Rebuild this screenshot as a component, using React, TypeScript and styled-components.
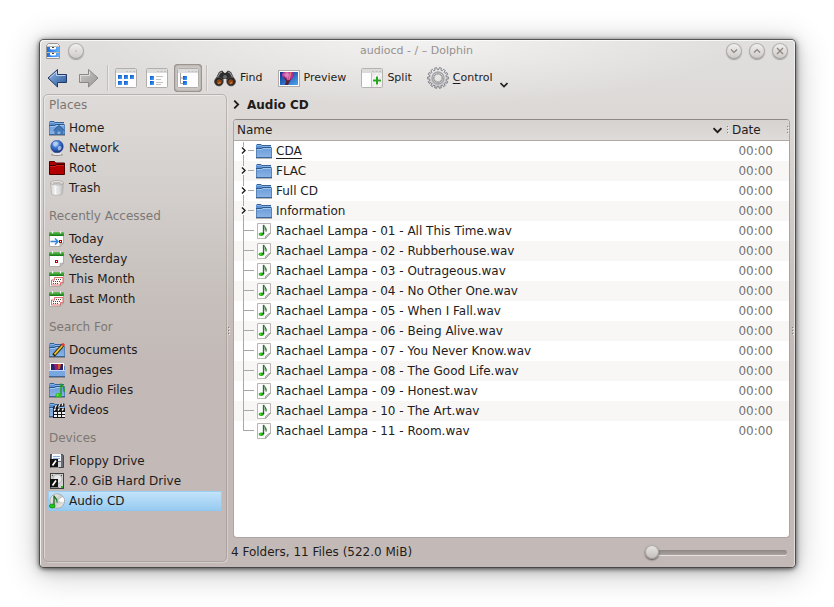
import React, { useState } from "react";
import styled, { createGlobalStyle, css } from "styled-components";

const GlobalStyle = createGlobalStyle`
  *, *::before, *::after { box-sizing: border-box; }
  body {
    margin: 0;
    background: #ffffff;
    color: #1f1c1b;
    font-family: "DejaVu Sans", sans-serif;
    font-size: 12px;
    line-height: 20px;
  }
  button {
    font: inherit;
    color: inherit;
    background: none;
    border: 0;
    padding: 0;
    margin: 0;
  }
  ul { list-style: none; margin: 0; padding: 0; }
  svg { display: block; flex: none; }
`;

const Desktop = styled.div`
  display: flex;
  min-height: 100vh;
  padding: 40px 39px 40px 40px;
`;

const Window = styled.main`
  display: flex;
  flex-direction: column;
  flex: 1;
  min-width: 0;
  border-radius: 4px;
  background:
    radial-gradient(ellipse 320px 66px at 50% 0, rgba(255, 255, 255, 0.6), rgba(255, 255, 255, 0)),
    linear-gradient(#e1dfde 0, #dcd9d7 70px, #d3cfcc 150px, #c6bfbb 260px, #c3bab7 320px);
  box-shadow:
    inset 1px 1px 0 rgba(255, 255, 255, 0.75),
    inset -1px 0 0 rgba(255, 255, 255, 0.5),
    0 0 0 1px rgba(60, 60, 60, 0.72),
    0 1px 4px 1px rgba(0, 0, 0, 0.6),
    0 2px 12px 1px rgba(0, 0, 0, 0.26),
    0 5px 32px 4px rgba(0, 0, 0, 0.2);
`;

const TitleBar = styled.header`
  display: grid;
  grid-template-columns: 1fr auto 1fr;
  align-items: center;
  height: 22px;
  padding: 0 7px 0 5px;
`;

const Title = styled.h1`
  margin: 0;
  font-size: 11px;
  font-weight: 400;
  line-height: 20px;
  color: #96918e;
`;

const TitleButtons = styled.div<{ $end?: boolean }>`
  display: flex;
  align-items: center;
  gap: 7px;
  justify-content: ${(p) => (p.$end ? "flex-end" : "flex-start")};
`;

const RoundButton = styled.button`
  display: grid;
  place-items: center;
  width: 16px;
  height: 16px;
  border-radius: 50%;
  background: linear-gradient(#f3f2f1, #cbc7c5);
  box-shadow: inset 0 0 0 1px rgba(125, 118, 114, 0.5), 0 1px 1px rgba(0, 0, 0, 0.28);
  color: #8b8582;
`;

const ToolBar = styled.div`
  display: flex;
  align-items: center;
  gap: 3px;
  height: 28px;
  margin-top: 2px;
  padding-left: 4px;
`;

const ToolButton = styled.button<{ $pressed?: boolean; $labelled?: boolean }>`
  display: flex;
  align-items: center;
  gap: 4px;
  height: 28px;
  padding: 0 ${(p) => (p.$labelled ? 9 : 3)}px 0 3px;
  font-size: 11px;
  border-radius: 4px;
  ${(p) =>
    p.$pressed &&
    css`
      background: #cdc7c4;
      box-shadow: inset 0 0 0 1px #9b9491, inset 0 0 2px 1px rgba(90, 80, 75, 0.4);
    `}
`;

const Mnemonic = styled.span`
  text-decoration: underline;
  text-underline-offset: 2px;
`;

const MenuArrow = styled.span`
  align-self: flex-end;
  margin: 0 0 3px 3px;
`;

const Separator = styled.span`
  width: 1px;
  height: 26px;
  margin: 0 1px;
  background: #c3bebb;
  box-shadow: 1px 0 0 #eceae9;
`;

const Content = styled.div`
  display: grid;
  grid-template-columns: 184px 4px minmax(0, 1fr) 5px;
  flex: 1;
  padding: 2px 0 0 3px;
`;

const Places = styled.nav`
  margin-bottom: 5px;
  padding: 0 4px;
  border: 1px solid rgba(150, 140, 136, 0.5);
  border-radius: 5px;
  box-shadow: inset 1px 1px 0 rgba(255, 255, 255, 0.4), 1px 1px 0 rgba(255, 255, 255, 0.3);
`;

const PlacesSection = styled.section`
  & + & { margin-top: 8px; }
`;

const PlacesHeading = styled.h2`
  margin: 0 0 3px;
  padding-left: 1px;
  font-size: 12px;
  font-weight: 400;
  line-height: 20px;
  color: #7d7774;
`;

const PlaceButton = styled.button<{ $selected: boolean }>`
  display: flex;
  align-items: center;
  gap: 4px;
  width: 100%;
  height: 20px;
  padding-left: 1px;
  line-height: 20px;
  text-align: left;
  border-radius: 2px;
  ${(p) =>
    p.$selected &&
    css`
      background: linear-gradient(#c5e4fa, #94caf0);
      box-shadow: inset 0 0 0 1px rgba(140, 199, 240, 0.7);
    `}
`;

const Splitter = styled.div`
  display: grid;
  place-items: center;
`;

const MainPane = styled.section`
  display: flex;
  flex-direction: column;
  min-width: 0;
`;

const Breadcrumb = styled.nav`
  display: flex;
  align-items: center;
  gap: 6px;
  height: 25px;
  padding: 0 0 4px 1px;
`;

const Crumb = styled.a`
  font-weight: 700;
  color: inherit;
  text-decoration: none;
`;

const ListFrame = styled.div`
  flex: 1;
  margin-left: 2px;
  overflow: hidden;
  background: #ffffff;
  border: 1px solid #aca5a2;
  border-top-color: #8f8885;
  border-radius: 4px;
`;

const FileTable = styled.table`
  width: 100%;
  table-layout: fixed;
  border-collapse: collapse;
`;

const DateColumn = styled.col`
  width: 60px;
`;

const HeadCell = styled.th`
  height: 20px;
  padding: 0 0 0 3px;
  font-weight: 400;
  line-height: 20px;
  text-align: left;
  background: linear-gradient(#d6d2d0, #dedbd9);
  border-bottom: 1px solid #b1a9a5;
`;

const HeadContent = styled.div`
  display: flex;
  align-items: center;
  gap: 5px;
  height: 19px;
  padding-top: 1px;
`;

const Spacer = styled.span`
  flex: 1;
`;

const FileRow = styled.tr`
  height: 20px;
  &:nth-child(even) { background: #f8f7f6; }
`;

const NameCell = styled.td`
  padding: 0;
`;

const NameContent = styled.div`
  display: flex;
  align-items: center;
  height: 20px;
`;

const FileName = styled.span<{ $current: boolean }>`
  margin-left: 4px;
  white-space: nowrap;
  ${(p) =>
    p.$current &&
    css`
      line-height: 14px;
      box-shadow: 0 1px 0 #1f1c1b;
    `}
`;

const DateCell = styled.td`
  padding: 0 16px 0 0;
  text-align: right;
  color: #77716e;
`;

const StatusBar = styled.footer`
  display: flex;
  align-items: center;
  justify-content: space-between;
  height: 29px;
  padding: 0 3px 1px 0;
`;

const ZoomSlider = styled.input`
  appearance: none;
  width: 142px;
  height: 16px;
  margin: 0;
  background: none;
  &::-webkit-slider-runnable-track {
    height: 5px;
    border-radius: 3px;
    background: linear-gradient(#8f8783, #aaa29e);
    box-shadow: 0 1px 0 #e6e2e0;
  }
  &::-webkit-slider-thumb {
    appearance: none;
    width: 14px;
    height: 14px;
    margin-top: -5px;
    border-radius: 50%;
    background: linear-gradient(#e9e7e6, #c2bdba);
    box-shadow: inset 0 0 0 1px rgba(130, 122, 118, 0.55), 0 1px 2px rgba(0, 0, 0, 0.6);
  }
`;

/* ---------- drawings ---------- */

const HiddenDefs = styled.svg`
  position: absolute;
`;

const Gradients = () => (
  <HiddenDefs width="0" height="0" aria-hidden="true">
    <defs>
      <linearGradient id="folder" x1="0" y1="0" x2="0" y2="1">
        <stop offset="0" stopColor="#6e9dd9" />
        <stop offset="1" stopColor="#8ab4e6" />
      </linearGradient>
      <linearGradient id="blue" x1="0" y1="0" x2="1" y2="1">
        <stop offset="0" stopColor="#a3c1e6" />
        <stop offset="0.5" stopColor="#5b86be" />
        <stop offset="1" stopColor="#2b5592" />
      </linearGradient>
      <linearGradient id="grey" x1="0" y1="0" x2="1" y2="1">
        <stop offset="0" stopColor="#c9c7c6" />
        <stop offset="1" stopColor="#9b9998" />
      </linearGradient>
      <linearGradient id="sky" x1="0" y1="0" x2="1" y2="1">
        <stop offset="0" stopColor="#0a2f8c" />
        <stop offset="1" stopColor="#4ba6f2" />
      </linearGradient>
      <linearGradient id="tile" x1="0" y1="0" x2="1" y2="1">
        <stop offset="0" stopColor="#0a51c4" />
        <stop offset="1" stopColor="#4aa8ff" />
      </linearGradient>
      <linearGradient id="green" x1="0" y1="0" x2="0" y2="1">
        <stop offset="0" stopColor="#6cc257" />
        <stop offset="1" stopColor="#0f7a14" />
      </linearGradient>
      <linearGradient id="drawer" x1="0" y1="0" x2="1" y2="0">
        <stop offset="0" stopColor="#1f6fe0" />
        <stop offset="1" stopColor="#62b0fa" />
      </linearGradient>
      <linearGradient id="metal" x1="0" y1="0" x2="0" y2="1">
        <stop offset="0" stopColor="#f2f2f4" />
        <stop offset="1" stopColor="#c4c4c9" />
      </linearGradient>
      <radialGradient id="balloon" cx="0.4" cy="0.3" r="0.7">
        <stop offset="0" stopColor="#f09ad0" />
        <stop offset="0.5" stopColor="#b43aa0" />
        <stop offset="1" stopColor="#7a2478" />
      </radialGradient>
      <radialGradient id="globe" cx="0.4" cy="0.3" r="0.7">
        <stop offset="0" stopColor="#bcd8fa" />
        <stop offset="0.45" stopColor="#3c74cf" />
        <stop offset="1" stopColor="#122f7c" />
      </radialGradient>
      <linearGradient id="can" x1="0" y1="0" x2="1" y2="0">
        <stop offset="0" stopColor="#c9c9c9" />
        <stop offset="0.35" stopColor="#ffffff" />
        <stop offset="1" stopColor="#b4b4b4" />
      </linearGradient>
      <linearGradient id="disc" x1="0" y1="0" x2="1" y2="1">
        <stop offset="0" stopColor="#ffffff" />
        <stop offset="0.5" stopColor="#c9c9c9" />
        <stop offset="1" stopColor="#f4f4f4" />
      </linearGradient>
    </defs>
  </HiddenDefs>
);

const Icon16 = ({ children }: { children: React.ReactNode }) => (
  <svg width="16" height="16" viewBox="0 0 16 16" aria-hidden="true">
    {children}
  </svg>
);

const Icon22 = ({ children }: { children: React.ReactNode }) => (
  <svg width="22" height="22" viewBox="0 0 22 22" aria-hidden="true">
    {children}
  </svg>
);

const FolderShape = () => (
  <>
    <path d="M0 14V2l1-1h4l1 1h9v12z" fill="#5b8fd0" />
    <path d="M1 1.500h4M6 2.500h9" stroke="#356193" />
    <path d="M1 2.500h4M6 3.500h9" stroke="#86b1e6" />
    <path d="M0 14.500V7h5l1-1.500h10v9z" fill="url(#folder)" />
    <path d="M0 5.500h5.500l1-1H15.500" stroke="#2b5688" fill="none" />
    <path d="M1 6.500h5l1-1H15" stroke="#a2c8f2" fill="none" />
    <path d="M0.500 6v8.500M15.500 5v9.500" stroke="#5684bd" />
    <path d="M0 14.500h16" stroke="#3c6595" />
    <path d="M0 15.500h16" stroke="#2a3138" strokeOpacity="0.35" />
  </>
);

const FolderIcon = () => <Icon16><FolderShape /></Icon16>;

const AudioFileIcon = () => (
  <Icon16>
    <path d="M1.500 0.500h13v9.500l-5 5.500h-8z" fill="#fcfcfc" stroke="#b9b6b4" />
    <path d="M14.500 10l-5 5.500v-2l3-2.500z" fill="#e2e0df" stroke="#8f8b89" strokeWidth="0.800" />
    <path d="M7.500 10.500V2c0.500 2 3.800 3 2.500 6.500" fill="none" stroke="#2c6b34" strokeWidth="1.300" />
    <path d="M8.500 3.500v4" stroke="#8fbf93" strokeWidth="0.800" />
    <ellipse cx="5.300" cy="11.300" rx="2.700" ry="1.800" fill="#26a51c" />
    <circle cx="4.500" cy="11.200" r="1" fill="#3fe01e" />
    <circle cx="7.400" cy="10.300" r="0.900" fill="#0d5a12" />
  </Icon16>
);

const HomeIcon = () => (
  <Icon16>
    <FolderShape />
    <path d="M4 10.500l6-5.500 6 5.500h-1.500v4h-3v-3h-3v3h-3v-4z" fill="#4476b5" />
    <path d="M4.500 10.500l5.500-5 5.500 5" stroke="#2f5b94" fill="none" strokeWidth="0.900" />
  </Icon16>
);

const NetworkIcon = () => (
  <Icon16>
    <ellipse cx="8" cy="14.700" rx="6" ry="1.200" fill="#8e8a88" />
    <ellipse cx="8" cy="14" rx="4.500" ry="0.900" fill="#f0efee" />
    <circle cx="8" cy="6.500" r="6.300" fill="url(#globe)" stroke="#2a4d97" strokeWidth="0.500" />
    <path d="M4 3c2-2 4-1 5 0s-1 2-2 3-3 0-3-3M9.500 6.500c2-1 3 0 3 1.500s-2 3-3 2.500-1-3 0-4" fill="#b9d2f3" fillOpacity="0.75" />
  </Icon16>
);

const RootIcon = () => (
  <Icon16>
    <path d="M0.500 14.500V1.500h5l1 1.500h9v11.500z" fill="#b20000" stroke="#4c0000" />
    <path d="M1 5.500h5l1.500-1H15" stroke="#3a0000" fill="none" />
    <path d="M1 6.500h5.500l1.500-1H15" stroke="#d01c1c" fill="none" />
  </Icon16>
);

const TrashIcon = () => (
  <Icon16>
    <path d="M1.500 2.500l1 11.500c2 1.800 9 1.800 11 0l1-11.500z" fill="url(#can)" stroke="#b5b2b0" strokeWidth="0.800" />
    <path d="M5 6v8M8 6.500v8M11 6v8" stroke="#dddbda" strokeWidth="0.800" />
    <ellipse cx="8" cy="2.800" rx="6.500" ry="2.200" fill="#ededed" stroke="#a5a2a0" strokeWidth="0.800" />
    <ellipse cx="8" cy="3.100" rx="4.800" ry="1.200" fill="#bdbab8" />
  </Icon16>
);

const CalendarIcon = ({ kind }: { kind: "today" | "yesterday" | "month" }) => (
  <Icon16>
    <path d="M0.500 1.500h14v10.500l-3.500 3.500H0.500z" fill="#fcfcfc" stroke="#b0acaa" />
    <path d="M14.500 12l-3.500 3.500v-3z" fill="#d2cfce" stroke="#989492" strokeWidth="0.600" />
    <rect x="0" y="1" width="15" height="4" rx="1" fill="url(#green)" />
    <path d="M3.500 0v2.500M11.500 0v2.500" stroke="#f4f4f4" strokeWidth="1.200" />
    {kind === "month" && (
      <>
        <path d="M5.500 6.500h8.500v5h-2.500v2.500H2.500V9h3z" fill="#fff8f7" stroke="#d9605c" strokeWidth="0.900" />
        <path d="M7 8.500h6M4 10.500h8M4 12.500h6" stroke="#4a4a4a" strokeDasharray="1 1" />
      </>
    )}
    {kind === "today" && (
      <>
        <path d="M1.500 10.500h7M6 7.500l3 3-3 3" fill="none" stroke="#2f86d8" strokeWidth="1.400" />
        <rect x="10.500" y="9.500" width="2" height="2" fill="#fff" stroke="#c00000" />
      </>
    )}
    {kind === "yesterday" && <rect x="6.500" y="9.500" width="2" height="2" fill="#fff" stroke="#c00000" />}
  </Icon16>
);

const DocumentsIcon = () => (
  <Icon16>
    <FolderShape />
    <path d="M4.500 13.500L14 3" stroke="#2d2608" strokeWidth="3.400" />
    <path d="M5.500 12.300L14 3" stroke="#f0c22d" strokeWidth="1.800" />
    <path d="M13.200 3.800L15 1.800" stroke="#dc3a3a" strokeWidth="3" />
  </Icon16>
);

const ImagesIcon = () => (
  <Icon16>
    <FolderShape />
    <rect x="0.500" y="1" width="14.500" height="8" fill="#fff" />
    <rect x="2" y="2" width="12" height="6" fill="#26246e" />
    <path d="M5 2h5v6H6z" fill="#8e2470" />
    <path d="M9 2h3l-1 5H9z" fill="#d8532f" />
    <path d="M0 8h16v6.500H0z" fill="#78a6de" />
    <path d="M0 8.500h16" stroke="#c0daf6" />
    <path d="M0 14.500h16" stroke="#3c6595" />
  </Icon16>
);

const AudioFolderIcon = () => (
  <Icon16>
    <FolderShape />
    <path d="M12 13V1.500c0.500 3 4 3 3 8.500" fill="none" stroke="#229a24" strokeWidth="1.500" />
    <ellipse cx="9.500" cy="13.300" rx="3" ry="2.200" fill="#2bbf20" />
    <circle cx="8.700" cy="13" r="1" fill="#6df04a" />
  </Icon16>
);

const VideosIcon = () => (
  <Icon16>
    <FolderShape />
    <path d="M4 4.500l11-3.500 0.700 2.500L5 7z" fill="#151515" />
    <path d="M6 5.800l1.500-2.500M9.500 4.800L11 2.300M13 3.700l1-2.400" stroke="#fff" strokeWidth="1.200" />
    <rect x="4" y="6" width="12" height="10" fill="#151515" />
    <path d="M5 8.500l1.500-2M9 8.500l1.500-2M13 8.500l1.500-2" stroke="#fff" strokeWidth="1.300" />
    <path d="M5 11h3M9 11h3M13 11h3M5 14h3M9 14h3M13 14h3" stroke="#f2f2f2" strokeWidth="2" />
  </Icon16>
);

const DriveBadge = () => (
  <>
    <rect x="1" y="6" width="8" height="8" fill="#111" />
    <path d="M3.500 12.500L7 7.500" stroke="#fff" strokeWidth="1.700" />
    <path d="M2 14.500h8" stroke="#8a8a8a" />
  </>
);

const FloppyIcon = () => (
  <Icon16>
    <path d="M1.500 1.500h12l1 1v12h-13z" fill="#6a6d74" stroke="#45484e" />
    <rect x="3" y="1" width="9" height="7" fill="#f3f6fa" />
    <path d="M4 3.500h7M4 5.500h7" stroke="#8fb1d8" />
    <rect x="9" y="9" width="3" height="5" fill="#d4d6d9" />
    <DriveBadge />
  </Icon16>
);

const HardDriveIcon = () => (
  <Icon16>
    <rect x="1.500" y="0.500" width="13" height="15" fill="#d2d2d1" stroke="#3e3e3e" />
    <circle cx="8.500" cy="6" r="4.500" fill="#e6e6e6" stroke="#a6a6a6" strokeWidth="0.800" />
    <circle cx="3.500" cy="2.500" r="0.700" fill="#555" />
    <circle cx="12.500" cy="2.500" r="0.700" fill="#555" />
    <rect x="12" y="13" width="2" height="2" fill="#29b31f" />
    <DriveBadge />
  </Icon16>
);

const AudioCdIcon = () => (
  <Icon16>
    <circle cx="8.200" cy="8" r="7.300" fill="url(#disc)" stroke="#9c9a99" strokeWidth="0.700" />
    <path d="M8 8L14 4a7 7 0 0 1 1 5z" fill="#fff" />
    <circle cx="8.200" cy="8" r="1.800" fill="#e9f3fa" stroke="#aaa" strokeWidth="0.500" />
    <path d="M5 12.500V2.500c0.500 3 4 3 3 7" fill="none" stroke="#176e19" strokeWidth="1.300" />
    <ellipse cx="3.200" cy="13" rx="2.900" ry="2" fill="#22c316" stroke="#0d7711" strokeWidth="0.600" />
  </Icon16>
);

const CabinetIcon = () => (
  <Icon16>
    <path d="M1.500 15.500v-13l2-2h9l2 2v13z" fill="#f2f2f2" stroke="#9a9694" />
    <rect x="2" y="4" width="12" height="5" fill="url(#drawer)" />
    <rect x="2" y="10" width="12" height="4" fill="url(#drawer)" />
    <path d="M2 3.500h12M2 9.500h12" stroke="#9a9694" strokeOpacity="0.6" />
    <path d="M5.500 4v2h5V4M5.500 10v2h5v-2" stroke="#fff" fill="#fff" />
    <path d="M7 4.500h2M7 10.500h2" stroke="#3a3a3a" />
  </Icon16>
);

const BackIcon = () => (
  <Icon22>
    <path d="M1 11L10.500 2.500V7.500H19.500v8h-9V20z" fill="url(#blue)" stroke="#1f3c68" strokeLinejoin="round" />
    <path d="M2.800 10.700L9.500 4.800v3.700h9" fill="none" stroke="#b8d0ee" />
  </Icon22>
);

const ForwardIcon = () => (
  <Icon22>
    <path d="M20 11L10.500 2.500V7.500H1.500v8h9V20z" fill="url(#grey)" stroke="#8a8786" strokeLinejoin="round" />
    <path d="M2.500 14.500v-6h9V4.500" fill="none" stroke="#dedddc" />
  </Icon22>
);

const ViewFrame = ({ children }: { children: React.ReactNode }) => (
  <Icon22>
    <rect x="0.500" y="1.500" width="21" height="19" rx="1" fill="#fdfdfd" stroke="#b2aeac" />
    <path d="M1 2h20v4H1z" fill="#dddcdc" />
    <path d="M11 4.500h2M14.500 4.500h2M18 4.500h2" stroke="#c0bdbc" />
    {children}
  </Icon22>
);

const Tile = ({ x, y }: { x: number; y: number }) => <rect x={x} y={y} width="4" height="4" fill="url(#tile)" />;

const IconsViewIcon = () => (
  <ViewFrame>
    <Tile x={3} y={8} /><Tile x={9} y={8} /><Tile x={15} y={8} />
    <Tile x={3} y={14} /><Tile x={9} y={14} />
  </ViewFrame>
);

const CompactViewIcon = () => (
  <ViewFrame>
    <Tile x={4} y={9} /><Tile x={4} y={14} />
    <path d="M10 9.500h7M10 12.500h5M10 15.500h7M10 17.500h5" stroke="#c5c2c1" />
  </ViewFrame>
);

const DetailsViewIcon = () => (
  <ViewFrame>
    <Tile x={6} y={9} /><Tile x={6} y={14} />
    <path d="M3.500 6v10.500H6M3.500 11H6" stroke="#a5a2a1" fill="none" />
  </ViewFrame>
);

const FindIcon = () => (
  <Icon22>
    <path d="M5 5l3-1.500 2.500 2.500h1L14 3.500 17 5l4.500 9a4.500 4.500 0 0 1-8.500 2l-0.500-4h-3L9 16a4.500 4.500 0 0 1-8.500-2z" fill="#2d2d2d" />
    <path d="M5 6.500l3-1.500M14 5l3 1.500M3 11l3-5M16 6l3 5" stroke="#929292" strokeWidth="1.200" />
    <circle cx="4.900" cy="14.600" r="4.300" fill="#222" stroke="#575757" strokeWidth="0.800" />
    <circle cx="17.100" cy="14.600" r="4.300" fill="#222" stroke="#575757" strokeWidth="0.800" />
    <circle cx="5.200" cy="14.800" r="2.600" fill="#8e4315" />
    <circle cx="16.800" cy="14.800" r="2.600" fill="#8e4315" />
    <path d="M4 16.500l2.500-1M16 16.500l2-1" stroke="#df8a45" strokeWidth="1.200" />
    <circle cx="11" cy="10" r="2" fill="#686868" />
  </Icon22>
);

const PreviewIcon = () => (
  <Icon22>
    <rect x="0.500" y="3.500" width="21" height="16" fill="#fff" stroke="#b0acaa" />
    <rect x="2" y="5" width="18" height="13" fill="url(#sky)" />
    <path d="M4 8c0-2 1-3 3-3h7c2 0 3 2 2 4-1 3-4 4-5 6h-2C8 12 4 11 4 8z" fill="url(#balloon)" />
    <path d="M9 5l1 8M13 5l-2 8" stroke="#f08a58" strokeWidth="0.900" />
    <path d="M5 9c2 1 3 2 4 4l1 1 3-2-3 6H7l1-4z" fill="#5a2038" />
  </Icon22>
);

const SplitIcon = () => (
  <Icon22>
    <rect x="0.500" y="1.500" width="21" height="19" rx="1" fill="#fdfdfd" stroke="#b6b2b0" />
    <path d="M1 2h20v4H1z" fill="#dcdbdb" />
    <path d="M11 4.500h2M14.500 4.500h2M18 4.500h2" stroke="#c0bdbc" />
    <path d="M11 6h10v14h-10z" fill="#ecebea" />
    <path d="M10.500 6v14" stroke="#c5c2c0" />
    <path d="M11 12l6-6M11 17L21 7M13 20l8-8M17 20l4-4" stroke="#fdfdfd" />
    <path d="M16 9v9M11.500 13.500h9" stroke="#fff" strokeWidth="3" />
    <path d="M16 9.500v8M12 13.500h8" stroke="#27a420" strokeWidth="2" />
  </Icon22>
);

const gearOutline = (teeth: number, outer: number, inner: number) => {
  const step = (Math.PI * 2) / teeth;
  const points: string[] = [];
  for (let i = 0; i < teeth; i++) {
    [
      [-0.3, inner],
      [-0.22, outer],
      [0.22, outer],
      [0.3, inner],
    ].forEach(([offset, radius]) => {
      const angle = (i + offset) * step;
      points.push(`${(11 + radius * Math.cos(angle)).toFixed(2)} ${(11 + radius * Math.sin(angle)).toFixed(2)}`);
    });
  }
  return `M${points.join("L")}Z`;
};

const GearIcon = () => (
  <Icon22>
    <path
      d={`${gearOutline(14, 10.4, 8.4)}M15.200 11a4.200 4.200 0 1 0-8.400 0a4.200 4.200 0 1 0 8.400 0Z`}
      fill="url(#metal)"
      fillRule="evenodd"
      stroke="#77777b"
      strokeWidth="0.900"
    />
    <circle cx="11" cy="11" r="6" fill="none" stroke="#a3a3a8" strokeWidth="1.400" />
  </Icon22>
);

const Chevron = ({ direction, size = 8 }: { direction: "right" | "down"; size?: number }) => (
  <svg width={size} height={size} viewBox="0 0 8 8" aria-hidden="true">
    <path
      d={direction === "right" ? "M2 0.500L5.500 4 2 7.500" : "M0.500 2L4 5.500 7.500 2"}
      fill="none"
      stroke="#1f1c1b"
      strokeWidth="1.600"
    />
  </svg>
);

const TitleGlyph = ({ d }: { d: string }) => (
  <svg width="8" height="8" viewBox="0 0 8 8" aria-hidden="true">
    <path d={d} fill="none" stroke="currentColor" strokeWidth="1.200" />
  </svg>
);

const Grip = () => (
  <svg width="2" height="8" viewBox="0 0 2 8" aria-hidden="true">
    <path d="M0.500 0v8" stroke="#827a77" strokeDasharray="1 2" />
    <path d="M1.500 1v7" stroke="#f2f0ef" strokeDasharray="1 2" />
  </svg>
);

const Branch = ({ folder, first, last }: { folder: boolean; first: boolean; last: boolean }) => (
  <svg width="22" height="20" viewBox="0 0 22 20" aria-hidden="true">
    {folder ? (
      <>
        <path d={`M9.500 ${first ? 1 : 0}v5M9.500 14v6M14 9.500h6`} stroke="#aba8a6" />
        <path d="M8 6.500l3 3-3 3" fill="none" stroke="#1f1c1b" strokeWidth="1.400" />
      </>
    ) : (
      <path d={`M9.500 0v${last ? 10 : 20}M9 9.500h11`} stroke="#aba8a6" />
    )}
  </svg>
);

/* ---------- data ---------- */

const sections = [
  {
    title: "Places",
    items: [
      { label: "Home", icon: <HomeIcon /> },
      { label: "Network", icon: <NetworkIcon /> },
      { label: "Root", icon: <RootIcon /> },
      { label: "Trash", icon: <TrashIcon /> },
    ],
  },
  {
    title: "Recently Accessed",
    items: [
      { label: "Today", icon: <CalendarIcon kind="today" /> },
      { label: "Yesterday", icon: <CalendarIcon kind="yesterday" /> },
      { label: "This Month", icon: <CalendarIcon kind="month" /> },
      { label: "Last Month", icon: <CalendarIcon kind="month" /> },
    ],
  },
  {
    title: "Search For",
    items: [
      { label: "Documents", icon: <DocumentsIcon /> },
      { label: "Images", icon: <ImagesIcon /> },
      { label: "Audio Files", icon: <AudioFolderIcon /> },
      { label: "Videos", icon: <VideosIcon /> },
    ],
  },
  {
    title: "Devices",
    items: [
      { label: "Floppy Drive", icon: <FloppyIcon /> },
      { label: "2.0 GiB Hard Drive", icon: <HardDriveIcon /> },
      { label: "Audio CD", icon: <AudioCdIcon /> },
    ],
  },
];

const folders = ["CDA", "FLAC", "Full CD", "Information"];

const tracks = [
  "All This Time",
  "Rubberhouse",
  "Outrageous",
  "No Other One",
  "When I Fall",
  "Being Alive",
  "You Never Know",
  "The Good Life",
  "Honest",
  "The Art",
  "Room",
].map((title, i) => `Rachael Lampa - ${String(i + 1).padStart(2, "0")} - ${title}.wav`);

const entries = [
  ...folders.map((name) => ({ name, folder: true })),
  ...tracks.map((name) => ({ name, folder: false })),
];

export default function App() {
  const [place, setPlace] = useState("Audio CD");
  const [view, setView] = useState("Details");

  const views = [
    { name: "Icons", icon: <IconsViewIcon /> },
    { name: "Compact", icon: <CompactViewIcon /> },
    { name: "Details", icon: <DetailsViewIcon /> },
  ];

  return (
    <>
      <GlobalStyle />
      <Gradients />
      <Desktop>
        <Window>
          <TitleBar>
            <TitleButtons>
              <CabinetIcon />
              <RoundButton aria-label="On all desktops">
                <TitleGlyph d="M3.500 4h1" />
              </RoundButton>
            </TitleButtons>
            <Title>audiocd - / – Dolphin</Title>
            <TitleButtons $end>
              <RoundButton aria-label="Minimize"><TitleGlyph d="M1 2.500l3 3 3-3" /></RoundButton>
              <RoundButton aria-label="Maximize"><TitleGlyph d="M1 5.500l3-3 3 3" /></RoundButton>
              <RoundButton aria-label="Close"><TitleGlyph d="M1 1l6 6M7 1L1 7" /></RoundButton>
            </TitleButtons>
          </TitleBar>

          <ToolBar role="toolbar">
            <ToolButton aria-label="Back"><BackIcon /></ToolButton>
            <ToolButton aria-label="Forward"><ForwardIcon /></ToolButton>
            <Separator />
            {views.map((v) => (
              <ToolButton
                key={v.name}
                aria-label={v.name}
                aria-pressed={view === v.name}
                $pressed={view === v.name}
                onClick={() => setView(v.name)}
              >
                {v.icon}
              </ToolButton>
            ))}
            <Separator />
            <ToolButton $labelled><FindIcon />Find</ToolButton>
            <ToolButton $labelled><PreviewIcon />Preview</ToolButton>
            <ToolButton $labelled><SplitIcon />Split</ToolButton>
            <ToolButton $labelled>
              <GearIcon />
              <span><Mnemonic>C</Mnemonic>ontrol</span>
              <MenuArrow><Chevron direction="down" /></MenuArrow>
            </ToolButton>
          </ToolBar>

          <Content>
            <Places aria-label="Places">
              {sections.map((section) => (
                <PlacesSection key={section.title}>
                  <PlacesHeading>{section.title}</PlacesHeading>
                  <ul>
                    {section.items.map((item) => (
                      <li key={item.label}>
                        <PlaceButton $selected={place === item.label} onClick={() => setPlace(item.label)}>
                          {item.icon}
                          {item.label}
                        </PlaceButton>
                      </li>
                    ))}
                  </ul>
                </PlacesSection>
              ))}
            </Places>
            <Splitter><Grip /></Splitter>
            <MainPane>
              <Breadcrumb aria-label="Location">
                <Chevron direction="right" size={9} />
                <Crumb href="#">Audio CD</Crumb>
              </Breadcrumb>
              <ListFrame>
                <FileTable>
                  <colgroup>
                    <col />
                    <DateColumn />
                  </colgroup>
                  <thead>
                    <tr>
                      <HeadCell aria-sort="ascending">
                        <HeadContent>
                          Name
                          <Spacer />
                          <Chevron direction="down" size={9} />
                          <Grip />
                        </HeadContent>
                      </HeadCell>
                      <HeadCell>
                        <HeadContent>
                          Date
                          <Spacer />
                          <Grip />
                        </HeadContent>
                      </HeadCell>
                    </tr>
                  </thead>
                  <tbody>
                    {entries.map((entry, i) => (
                      <FileRow key={entry.name}>
                        <NameCell>
                          <NameContent>
                            <Branch folder={entry.folder} first={i === 0} last={i === entries.length - 1} />
                            {entry.folder ? <FolderIcon /> : <AudioFileIcon />}
                            <FileName $current={i === 0}>{entry.name}</FileName>
                          </NameContent>
                        </NameCell>
                        <DateCell>00:00</DateCell>
                      </FileRow>
                    ))}
                  </tbody>
                </FileTable>
              </ListFrame>
              <StatusBar>
                <span>4 Folders, 11 Files (522.0 MiB)</span>
                <ZoomSlider type="range" aria-label="Icon size" min="0" max="16" defaultValue="0" />
              </StatusBar>
            </MainPane>
            <Splitter><Grip /></Splitter>
          </Content>
        </Window>
      </Desktop>
    </>
  );
}
